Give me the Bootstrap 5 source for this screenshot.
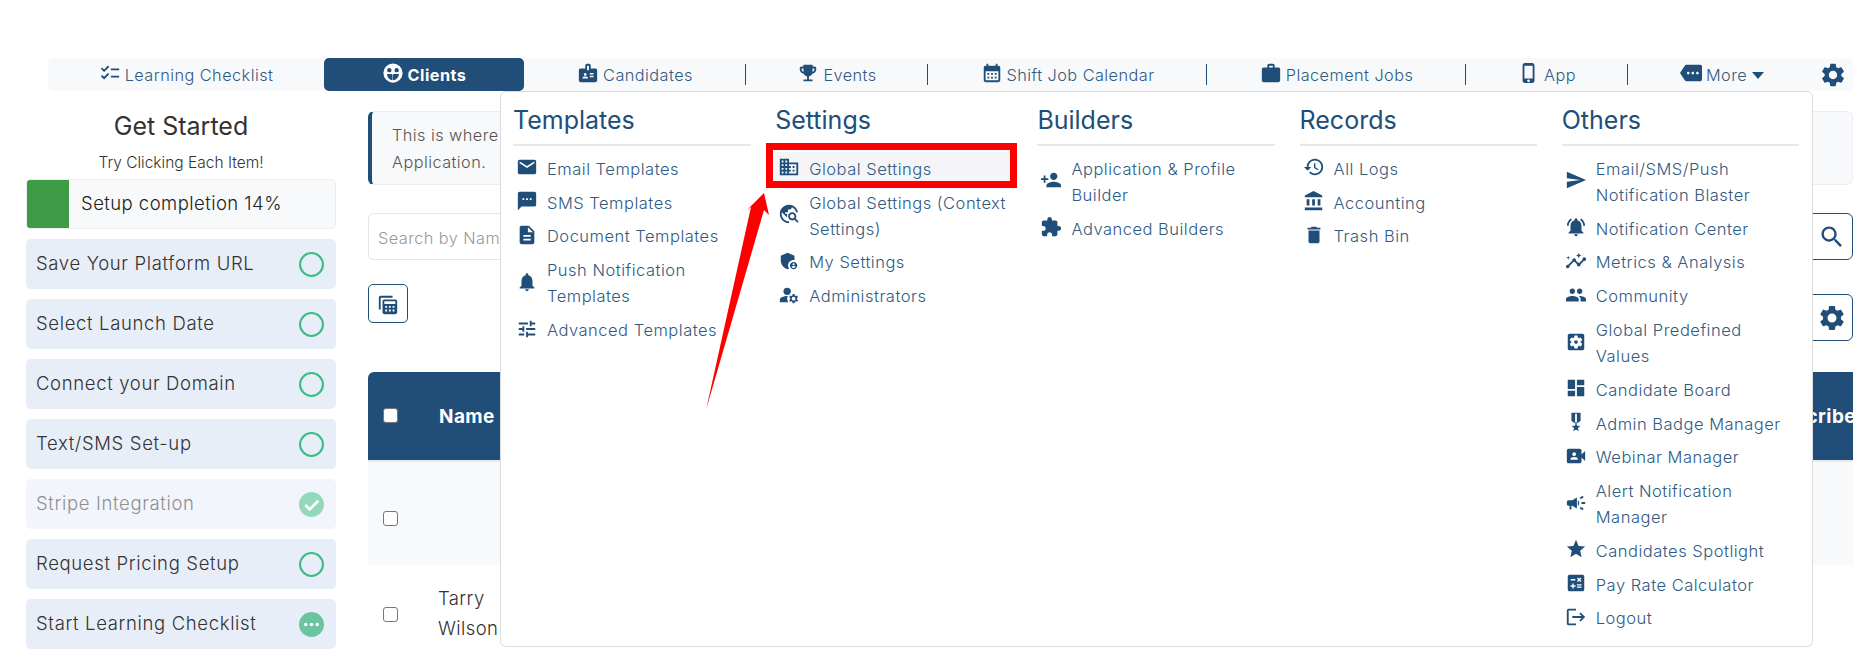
<!DOCTYPE html>
<html lang="en">
<head>
  <meta charset="UTF-8">
  <meta name="viewport" content="width=device-width, initial-scale=1.0">
  <title>Clients</title>
  <link href="https://cdn.jsdelivr.net/npm/bootstrap@5.3.0/dist/css/bootstrap.min.css" rel="stylesheet">
  <style>
    body {
      font-family: "Inter", "Lato", sans-serif;
      font-weight: 300;
      font-size: 16.3px;
      letter-spacing: .45px;
      color: #333;
      background: #fff;
      height: 655px;
      overflow: hidden;
      position: relative;
    }
    .ico {
      fill: #204e78;
      flex-shrink: 0;
    }
    .page-wrap {
      padding: 58px 16px 0 26px;
    }
    .top-bar {
      margin-left: 22px;
      height: 33px;
      background: #f8f9fa;
      border-radius: 5px;
    }
    .top-tab {
      height: 33px;
      display: flex;
      align-items: center;
      justify-content: center;
      gap: 4px;
      padding-top: 2px;
      position: relative;
      white-space: nowrap;
      color: #2f5a82;
      text-decoration: none;
    }
    .top-tab .ico {
      margin-top: -6px;
    }
    .top-tab.sep::after {
      content: "";
      position: absolute;
      right: 0;
      top: 6px;
      height: 21px;
      border-right: 1.5px solid #204e78;
    }
    .tab-active {
      background: #204e78;
      color: #fff;
      font-weight: 700;
      border-radius: 5px;
    }
    .tab-active .ico {
      fill: #fff;
    }
    .gear-tab {
      justify-content: flex-end;
      padding: 0 6px 0 0;
    }
    .gear-tab .ico {
      margin-top: 0;
    }
    .caret-down {
      width: 0;
      height: 0;
      border-left: 6.5px solid transparent;
      border-right: 6.5px solid transparent;
      border-top: 7px solid #204e78;
      margin-left: 1px;
    }
    .content-row {
      margin-top: 20px;
      gap: 32px;
    }
    .side-col {
      width: 310px;
      flex-shrink: 0;
    }
    .side-title {
      font-size: 25px;
      line-height: 30px;
      color: #333;
      text-align: center;
      margin: 0 0 10px;
      font-weight: 400;
      letter-spacing: 0;
    }
    .side-note {
      font-size: 15.5px;
      line-height: 24px;
      text-align: center;
      margin-bottom: 4px;
      letter-spacing: 0;
    }
    .setup-box {
      height: 50px;
      background: #f8f9fa;
      border: 1px solid #eceef1;
      border-radius: 4px;
      font-size: 18.5px;
      color: #222;
      overflow: hidden;
    }
    .setup-fill {
      width: 42px;
      background: #3f9c46;
      align-self: stretch;
      margin-right: 12px;
    }
    .step-row {
      height: 50px;
      margin-top: 10px;
      padding: 0 12px 0 10px;
      background: #e8eef8;
      border-radius: 5px;
      font-size: 18.5px;
      letter-spacing: .65px;
      color: #333;
    }
    .step-off {
      opacity: .55;
    }
    .main-col {
      flex: 1;
      min-width: 0;
    }
    .info-box {
      height: 74px;
      background: #f8f9fa;
      border: 1px solid #eceef1;
      border-left: 4px solid #204e78;
      border-radius: 6px;
      padding: 10px 20px;
      line-height: 27px;
      color: #555;
    }
    .search-row {
      margin-top: 28px;
      height: 47px;
    }
    .search-input {
      flex: 1;
      border: 1px solid #e3e5e8;
      border-right: 0;
      border-radius: 6px 0 0 6px;
      padding: 3px 9px 0;
      color: #999;
      display: flex;
      align-items: center;
    }
    .square-btn {
      width: 42px;
      border: 1px solid #204e78;
      border-radius: 0 6px 6px 0;
      background: #fff;
    }
    .tools-row {
      height: 47px;
      margin-top: 24px;
    }
    .calc-btn {
      width: 40px;
      height: 39px;
      border: 1px solid #204e78;
      border-radius: 5px;
      background: #fff;
      padding: 0;
    }
    .gear-btn {
      width: 60px;
      height: 47px;
      border: 1px solid #204e78;
      border-radius: 6px;
      background: #fff;
      margin-top: 10px;
      padding: 0 0 0 18px;
    }
    .data-grid {
      margin-top: 41px;
      width: 100%;
      table-layout: fixed;
      border-collapse: separate;
      border-spacing: 0;
    }
    .data-grid th {
      height: 90px;
      padding-top: 4px;
      background: #204e78;
      color: #fff;
      font-size: 19px;
      letter-spacing: .4px;
      font-weight: 700;
      border-bottom: 2px solid #e6e9ee;
      white-space: nowrap;
      overflow: hidden;
    }
    .data-grid th.tick-col {
      padding-top: 0;
    }
    .data-grid td {
      padding: 0;
    }
    .data-grid th:first-child {
      border-top-left-radius: 6px;
    }
    .row-shade td {
      height: 103px;
      background: #f8f9fa;
    }
    .row-plain td {
      height: 90px;
      font-size: 18.5px;
      letter-spacing: .4px;
      line-height: 30px;
      padding-top: 5px;
      color: #333;
    }
    .data-grid td.tick-col {
      width: 70px;
      padding-left: 15px;
      padding-top: 9px;
    }
    .data-grid th.tick-col {
      width: 70px;
      padding-left: 15px;
    }
    .tick {
      display: block;
      width: 15px;
      height: 15px;
      border: 1.5px solid #777;
      border-radius: 3px;
      background: #fff;
    }
    .menu-panel {
      position: absolute;
      left: 500px;
      top: 91px;
      width: 1313px;
      height: 556px;
      background: #fff;
      border: 1px solid #d9dbde;
      border-radius: 6px;
      padding: 11px 12px 0;
      gap: 24.6px;
      z-index: 5;
    }
    .menu-col {
      width: 237.6px;
      flex-shrink: 0;
    }
    .menu-head {
      font-size: 25px;
      line-height: 35px;
      color: #204e78;
      font-weight: 400;
      letter-spacing: 0;
      margin: 0;
      padding-bottom: 6px;
      border-bottom: 2px solid #e6e8eb;
    }
    .menu-link {
      display: flex;
      align-items: center;
      gap: 9px;
      padding: 3.9px 4px 3.9px 3px;
      line-height: 26px;
      color: #2f5a82;
      text-decoration: none;
      font-size: 16.5px;
      letter-spacing: .5px;
      white-space: nowrap;
    }
    .menu-link .ico {
      margin-top: -3px;
    }
    .menu-list {
      padding-top: 6px;
    }
    .menu-on {
      background: #f5f5f7;
    }
    .red-mark {
      position: absolute;
      left: 766px;
      top: 143px;
      width: 251px;
      height: 45px;
      border: 7px solid #f00;
      z-index: 6;
    }
    .red-arrow {
      position: absolute;
      left: 690px;
      top: 186px;
      z-index: 7;
    }
  </style>
</head>
<body>
  <svg width="0" height="0" class="position-absolute">
    <defs>
      <symbol id="i-checklist" viewBox="0 0 24 24"><path d="M22 7h-9v2h9V7zm0 8h-9v2h9v-2zM5.54 11L2 7.46l1.41-1.41 2.12 2.12 4.24-4.24 1.41 1.41L5.54 11zm0 8L2 15.46l1.41-1.41 2.12 2.12 4.24-4.24 1.41 1.41L5.54 19z"/></symbol>
      <symbol id="i-face" viewBox="0 0 24 24"><path fill-rule="evenodd" d="M12 1.5a10.5 10.5 0 1 0 0 21 10.5 10.5 0 0 0 0-21zM8 6.5a2.4 2.4 0 1 1 0 4.8 2.4 2.4 0 0 1 0-4.8zm8 0a2.4 2.4 0 1 1 0 4.8 2.4 2.4 0 0 1 0-4.8zM5.5 13.2h4.6c.8 0 1.4.6 1.4 1.4v5.4c-3.2-.3-5.8-3-6-6.800zm7.500 0h5.500c-.3 3.900-3 6.500-6.500 6.800v-5.800c0-.5.400-1 1-1z"/></symbol>
      <symbol id="i-badge" viewBox="0 0 24 24"><path d="M20 7h-5V4c0-1.100-.9-2-2-2h-2c-1.100 0-2 .9-2 2v3H4c-1.100 0-2 .9-2 2v11c0 1.100.9 2 2 2h16c1.100 0 2-.9 2-2V9c0-1.100-.9-2-2-2zM9 12c.83 0 1.500.67 1.500 1.500S9.830 15 9 15s-1.500-.67-1.500-1.500S8.170 12 9 12zm3 6H6v-.43c0-.6.36-1.150.92-1.390.64-.28 1.340-.43 2.080-.43s1.440.15 2.080.43c.55.24.92.78.92 1.390V18zm1-9h-2V4h2v5zm5 7.500h-4V15h4v1.500zm0-3h-4V12h4v1.500z"/></symbol>
      <symbol id="i-trophy" viewBox="0 0 24 24"><path d="M19 5h-2V3H7v2H5c-1.1 0-2 .9-2 2v1c0 2.55 1.92 4.63 4.39 4.94.63 1.5 1.98 2.63 3.61 2.96V19H7v2h10v-2h-4v-3.1c1.63-.33 2.98-1.46 3.61-2.96C19.08 12.63 21 10.55 21 8V7c0-1.1-.9-2-2-2zM5 8V7h2v3.82C5.84 10.4 5 9.3 5 8zm14 0c0 1.3-.84 2.4-2 2.82V7h2v1z"/></symbol>
      <symbol id="i-calendar" viewBox="0 0 24 24"><path d="M19 4h-1V2h-2v2H8V2H6v2H5c-1.11 0-1.99.9-1.99 2L3 20c0 1.1.89 2 2 2h14c1.1 0 2-.9 2-2V6c0-1.1-.9-2-2-2zm0 16H5V10h14v10zM9 14H7v-2h2v2zm4 0h-2v-2h2v2zm4 0h-2v-2h2v2zm-8 4H7v-2h2v2zm4 0h-2v-2h2v2zm4 0h-2v-2h2v2z"/></symbol>
      <symbol id="i-bag" viewBox="0 0 24 24"><path d="M20 6h-4V4c0-1.11-.89-2-2-2h-4c-1.11 0-2 .89-2 2v2H4c-1.11 0-2 .89-2 2v12c0 1.110.89 2 2 2h16c1.110 0 2-.89 2-2V8c0-1.11-.89-2-2-2zm-6 0h-4V4h4v2z"/></symbol>
      <symbol id="i-phone" viewBox="0 0 24 24"><path d="M15.5 1h-8C6.12 1 5 2.12 5 3.5v17C5 21.88 6.12 23 7.5 23h8c1.38 0 2.5-1.12 2.5-2.5v-17C18 2.12 16.88 1 15.5 1zm-4 21c-.83 0-1.5-.67-1.5-1.5s.67-1.5 1.5-1.5 1.5.67 1.5 1.5-.67 1.5-1.5 1.5zm4.5-4H7V4h9v14z"/></symbol>
      <symbol id="i-more" viewBox="0 0 24 24"><path d="M22 3H7c-.69 0-1.23.35-1.59.88L0 12l5.41 8.11c.36.53.9.89 1.59.89h15c1.1 0 2-.9 2-2V5c0-1.1-.9-2-2-2zM9 13.5c-.83 0-1.5-.67-1.5-1.5s.67-1.5 1.5-1.5 1.5.67 1.5 1.5-.67 1.5-1.5 1.5zm5 0c-.83 0-1.5-.67-1.5-1.5s.67-1.5 1.5-1.5 1.5.67 1.5 1.5-.67 1.5-1.5 1.5zm5 0c-.83 0-1.5-.67-1.5-1.5s.67-1.5 1.5-1.5 1.5.67 1.5 1.5-.67 1.5-1.5 1.5z"/></symbol>
      <symbol id="i-gear" viewBox="0 0 24 24"><path d="M19.14 12.94c.04-.3.06-.61.06-.94 0-.32-.02-.64-.07-.94l2.03-1.58c.18-.14.23-.41.12-.61l-1.92-3.32c-.12-.22-.37-.29-.59-.22l-2.39.96c-.5-.38-1.03-.7-1.62-.94l-.36-2.54c-.04-.24-.24-.41-.48-.41h-3.84c-.24 0-.43.17-.47.41l-.36 2.54c-.59.24-1.13.57-1.62.94l-2.39-.96c-.22-.08-.47 0-.59.22L2.74 8.87c-.12.21-.08.47.12.61l2.03 1.58c-.05.3-.09.63-.09.94s.02.64.07.94l-2.03 1.58c-.18.14-.23.41-.12.61l1.92 3.32c.12.22.37.29.59.22l2.39-.96c.5.38 1.03.7 1.62.94l.36 2.54c.05.24.24.41.48.41h3.84c.24 0 .44-.17.47-.41l.36-2.54c.59-.24 1.13-.56 1.62-.94l2.39.96c.22.08.47 0 .59-.22l1.92-3.32c.12-.22.07-.47-.12-.61l-2.01-1.58zM12 15.6c-1.98 0-3.6-1.62-3.6-3.6s1.62-3.6 3.6-3.6 3.6 1.62 3.6 3.6-1.62 3.6-3.6 3.6z"/></symbol>
      <symbol id="i-search" viewBox="0 0 24 24"><path d="M15.5 14h-.79l-.28-.27C15.41 12.59 16 11.11 16 9.5 16 5.91 13.09 3 9.5 3S3 5.91 3 9.5 5.91 16 9.5 16c1.61 0 3.09-.59 4.23-1.57l.27.28v.79l5 4.99L20.49 19l-4.99-5zm-6 0C7.01 14 5 11.99 5 9.5S7.01 5 9.5 5 14 7.01 14 9.5 11.99 14 9.5 14z"/></symbol>
      <symbol id="i-calc-copy" viewBox="0 0 24 24"><path d="M4 2h13v2H4v13H2V4c0-1.1.9-2 2-2z"/><path fill-rule="evenodd" d="M8 6h12c1.1 0 2 .9 2 2v12c0 1.1-.9 2-2 2H8c-1.1 0-2-.9-2-2V8c0-1.1.9-2 2-2zm0 2v3h12V8H8zm1 5v2h2v-2H9zm4 0v2h2v-2h-2zm4 0v2h2v-2h-2zm-8 4v2h2v-2H9zm4 0v2h2v-2h-2zm4 0v2h2v-2h-2z"/></symbol>
      <symbol id="i-email" viewBox="0 0 24 24"><path d="M20 4H4c-1.1 0-1.99.9-1.99 2L2 18c0 1.1.9 2 2 2h16c1.1 0 2-.9 2-2V6c0-1.1-.9-2-2-2zm0 4l-8 5-8-5V6l8 5 8-5v2z"/></symbol>
      <symbol id="i-sms" viewBox="0 0 24 24"><path d="M20 2H4c-1.1 0-1.99.9-1.99 2L2 22l4-4h14c1.1 0 2-.9 2-2V4c0-1.1-.9-2-2-2zM9 11H7V9h2v2zm4 0h-2V9h2v2zm4 0h-2V9h2v2z"/></symbol>
      <symbol id="i-doc" viewBox="0 0 24 24"><path d="M14 2H6c-1.1 0-1.99.9-1.99 2L4 20c0 1.1.89 2 1.99 2H18c1.1 0 2-.9 2-2V8l-6-6zm2 16H8v-2h8v2zm0-4H8v-2h8v2zm-3-5V3.5L18.5 9H13z"/></symbol>
      <symbol id="i-bell" viewBox="0 0 24 24"><path d="M12 22c1.1 0 2-.9 2-2h-4c0 1.1.89 2 2 2zm6-6v-5c0-3.07-1.64-5.64-4.5-6.32V4c0-.83-.67-1.5-1.5-1.5s-1.5.67-1.5 1.5v.68C7.63 5.36 6 7.92 6 11v5l-2 2v1h16v-1l-2-2z"/></symbol>
      <symbol id="i-tune" viewBox="0 0 24 24"><path d="M3 17v2h6v-2H3zM3 5v2h10V5H3zm10 16v-2h8v-2h-8v-2h-2v6h2zM7 9v2H3v2h4v2h2V9H7zm14 4v-2H11v2h10zm-6-4h2V7h4V5h-4V3h-2v6z"/></symbol>
      <symbol id="i-domain" viewBox="0 0 24 24"><path d="M12 7V3H2v18h20V7H12zM6 19H4v-2h2v2zm0-4H4v-2h2v2zm0-4H4V9h2v2zm0-4H4V5h2v2zm4 12H8v-2h2v2zm0-4H8v-2h2v2zm0-4H8V9h2v2zm0-4H8V5h2v2zm10 12h-8v-2h2v-2h-2v-2h2v-2h-2V9h8v10zm-2-8h-2v2h2v-2zm0 4h-2v2h2v-2z"/></symbol>
      <symbol id="i-travel" viewBox="0 0 24 24"><path d="M19.3 16.9c.4-.7.7-1.5.7-2.4 0-2.5-2-4.5-4.5-4.5S11 12 11 14.5s2 4.5 4.5 4.5c.9 0 1.7-.3 2.4-.7l3.2 3.2 1.4-1.4-3.2-3.2zm-3.8.1c-1.4 0-2.5-1.1-2.5-2.5s1.1-2.5 2.5-2.5 2.5 1.1 2.5 2.5-1.1 2.5-2.5 2.5zM12 20v2C6.48 22 2 17.52 2 12S6.48 2 12 2c4.84 0 8.87 3.44 9.8 8h-2.07c-.64-2.46-2.4-4.47-4.73-5.41V5c0 1.1-.9 2-2 2h-2v2c0 .55-.45 1-1 1H8v2h2v3H9l-4.79-4.79C4.08 10.79 4 11.38 4 12c0 4.41 3.59 8 8 8z"/></symbol>
      <symbol id="i-shield" viewBox="0 0 24 24"><path d="M17 11c.34 0 .67.04 1 .09V6.27L10.5 3 3 6.27v4.91c0 4.54 3.2 8.79 7.5 9.82.55-.13 1.08-.32 1.6-.55-.69-.98-1.1-2.17-1.1-3.45 0-3.31 2.69-6 6-6z"/><path d="M17 13c-2.21 0-4 1.79-4 4s1.79 4 4 4 4-1.79 4-4-1.79-4-4-4zm0 1.38c.62 0 1.12.51 1.12 1.12s-.51 1.12-1.12 1.12-1.12-.51-1.12-1.12.5-1.12 1.12-1.12zm0 5.37c-.93 0-1.74-.46-2.24-1.17.05-.72 1.51-1.08 2.24-1.08s2.19.36 2.24 1.08c-.5.71-1.31 1.17-2.24 1.17z"/></symbol>
      <symbol id="i-admins" viewBox="0 0 24 24"><circle cx="10" cy="8" r="4"/><path d="M10.67 13.02c-.22-.01-.44-.02-.67-.02-2.42 0-4.68.67-6.61 1.82-.88.52-1.39 1.5-1.39 2.53V20h9.26c-.79-1.13-1.26-2.51-1.26-4 0-1.07.25-2.07.67-2.98z"/><path d="M20.75 16c0-.22-.03-.42-.06-.63l1.14-1.01-1-1.73-1.45.49c-.32-.27-.68-.48-1.08-.63L18 11h-2l-.3 1.49c-.4.15-.76.36-1.08.63l-1.45-.49-1 1.73 1.14 1.01c-.03.21-.06.41-.06.63s.03.42.06.63l-1.14 1.01 1 1.73 1.45-.49c.32.27.68.48 1.08.63L16 21h2l.3-1.49c.4-.15.76-.36 1.08-.63l1.45.49 1-1.73-1.14-1.01c.03-.21.06-.41.06-.63zM17 18c-1.1 0-2-.9-2-2s.9-2 2-2 2 .9 2 2-.9 2-2 2z"/></symbol>
      <symbol id="i-personadd" viewBox="0 0 24 24"><path d="M15 12c2.21 0 4-1.79 4-4s-1.79-4-4-4-4 1.79-4 4 1.79 4 4 4zm-9-2V7H4v3H1v2h3v3h2v-3h3v-2H6zm9 4c-2.67 0-8 1.34-8 4v2h16v-2c0-2.66-5.33-4-8-4z"/></symbol>
      <symbol id="i-puzzle" viewBox="0 0 24 24"><path d="M20.5 11H19V7c0-1.1-.9-2-2-2h-4V3.5C13 2.12 11.88 1 10.5 1S8 2.12 8 3.5V5H4c-1.1 0-1.99.9-1.99 2v3.8H3.5c1.49 0 2.7 1.21 2.7 2.7s-1.21 2.7-2.7 2.7H2V20c0 1.1.9 2 2 2h3.8v-1.5c0-1.49 1.21-2.7 2.7-2.7 1.49 0 2.7 1.21 2.7 2.7V22H17c1.1 0 2-.9 2-2v-4h1.5c1.38 0 2.5-1.12 2.5-2.5S21.88 11 20.5 11z"/></symbol>
      <symbol id="i-history" viewBox="0 0 24 24"><path d="M13 3c-4.97 0-9 4.03-9 9H1l3.89 3.89.07.14L9 12H6c0-3.87 3.13-7 7-7s7 3.13 7 7-3.13 7-7 7c-1.93 0-3.68-.79-4.94-2.06l-1.42 1.42C8.27 19.99 10.51 21 13 21c4.97 0 9-4.03 9-9s-4.03-9-9-9zm-1 5v5l4.28 2.54.72-1.21-3.5-2.08V8H12z"/></symbol>
      <symbol id="i-bank" viewBox="0 0 24 24"><path d="M4 10v7h3v-7H4zm6 0v7h3v-7h-3zM2 22h19v-3H2v3zm14-12v7h3v-7h-3zm-4.5-9L2 6v2h19V6l-9.5-5z"/></symbol>
      <symbol id="i-trash" viewBox="0 0 24 24"><path d="M6 19c0 1.1.9 2 2 2h8c1.1 0 2-.9 2-2V7H6v12zM19 4h-3.5l-1-1h-5l-1 1H5v2h14V4z"/></symbol>
      <symbol id="i-send" viewBox="0 0 24 24"><path d="M2.01 21L23 12 2.01 3 2 10l15 2-15 2z"/></symbol>
      <symbol id="i-bellactive" viewBox="0 0 24 24"><path d="M7.58 4.08L6.15 2.65C3.75 4.48 2.17 7.3 2.03 10.5h2c.15-2.65 1.51-4.97 3.55-6.42zm12.39 6.42h2c-.15-3.2-1.73-6.02-4.12-7.85l-1.42 1.43c2.02 1.45 3.39 3.77 3.54 6.42zM18 11c0-3.07-1.64-5.64-4.5-6.32V4c0-.83-.67-1.5-1.5-1.5s-1.5.67-1.5 1.5v.68C7.63 5.36 6 7.92 6 11v5l-2 2v1h16v-1l-2-2v-5zm-6 11c.14 0 .27-.01.4-.04.65-.14 1.18-.58 1.44-1.18.1-.24.15-.5.15-.78h-4c.01 1.1.9 2 2.01 2z"/></symbol>
      <symbol id="i-insights" viewBox="0 0 24 24"><path d="M21 8c-1.45 0-2.26 1.44-1.93 2.51l-3.55 3.56c-.3-.09-.74-.09-1.04 0l-2.55-2.55C12.27 10.45 11.46 9 10 9c-1.45 0-2.27 1.44-1.93 2.52l-4.56 4.55C2.44 15.74 1 16.55 1 18c0 1.1.9 2 2 2 1.45 0 2.26-1.44 1.93-2.51l4.55-4.56c.3.09.74.09 1.04 0l2.55 2.55C12.73 16.55 13.54 18 15 18c1.45 0 2.27-1.44 1.93-2.52l3.56-3.55c1.07.33 2.51-.48 2.51-1.93 0-1.1-.9-2-2-2z"/><path d="M15 9l.94-2.07L18 6l-2.06-.93L15 3l-.92 2.07L12 6l2.08.93zM3.5 11L4 9l2-.5L4 8l-.5-2L3 8l-2 .5L3 9z"/></symbol>
      <symbol id="i-people" viewBox="0 0 24 24"><path d="M16 11c1.66 0 2.99-1.34 2.99-3S17.66 5 16 5c-1.66 0-3 1.34-3 3s1.34 3 3 3zm-8 0c1.66 0 2.99-1.34 2.99-3S9.66 5 8 5C6.34 5 5 6.34 5 8s1.34 3 3 3zm0 2c-2.33 0-7 1.17-7 3.5V19h14v-2.5c0-2.33-4.67-3.5-7-3.5zm8 0c-.29 0-.62.02-.97.05 1.16.84 1.97 1.97 1.97 3.45V19h6v-2.5c0-2.33-4.67-3.5-7-3.5z"/></symbol>
      <symbol id="i-setbox" viewBox="0 0 24 24"><path d="M12 10c-1.1 0-2 .9-2 2s.9 2 2 2 2-.9 2-2-.9-2-2-2zm7-7H5c-1.11 0-2 .9-2 2v14c0 1.1.89 2 2 2h14c1.11 0 2-.9 2-2V5c0-1.1-.89-2-2-2zm-1.75 9c0 .23-.02.46-.05.68l1.48 1.16c.13.11.17.3.08.45l-1.4 2.42c-.09.15-.27.21-.43.15l-1.74-.7c-.36.28-.76.51-1.18.69l-.26 1.85c-.03.17-.18.3-.35.3h-2.8c-.17 0-.32-.13-.35-.29l-.26-1.85c-.43-.18-.82-.41-1.18-.69l-1.74.7c-.16.06-.34 0-.43-.15l-1.4-2.42c-.09-.15-.05-.34.08-.45l1.48-1.16c-.03-.23-.05-.46-.05-.69 0-.23.02-.46.05-.68l-1.48-1.16c-.13-.11-.17-.3-.08-.45l1.4-2.42c.09-.15.27-.21.43-.15l1.74.7c.36-.28.76-.51 1.18-.69l.26-1.85c.03-.17.18-.3.35-.3h2.8c.17 0 .32.13.35.29l.26 1.85c.43.18.82.41 1.18.69l1.74-.7c.16-.06.34 0 .43.15l1.4 2.42c.09.15.05.34-.08.45l-1.48 1.16c.03.23.05.46.05.69z"/></symbol>
      <symbol id="i-board" viewBox="0 0 24 24"><path d="M3 13h8V3H3v10zm0 8h8v-6H3v6zm10 0h8V11h-8v10zm0-18v6h8V3h-8z"/></symbol>
      <symbol id="i-medal" viewBox="0 0 24 24"><path d="M17 10.43V2H7v8.43c0 .35.18.68.49.86l4.18 2.51-.99 2.34-3.41.29 2.59 2.24L9.07 22 12 20.23 14.93 22l-.78-3.33 2.59-2.24-3.41-.29-.99-2.34 4.18-2.51c.3-.18.48-.5.48-.86zm-4 1.8l-1 .6-1-.6V3h2v9.23z"/></symbol>
      <symbol id="i-video" viewBox="0 0 24 24"><path d="M18 10.48V6c0-1.1-.9-2-2-2H4c-1.1 0-2 .9-2 2v12c0 1.1.9 2 2 2h12c1.1 0 2-.9 2-2v-4.48l4 3.98v-11l-4 3.98zM10 8c1.1 0 2 .9 2 2s-.9 2-2 2-2-.9-2-2 .9-2 2-2zm4 8H6v-.57c0-.81.48-1.53 1.22-1.85.85-.37 1.79-.58 2.78-.58.99 0 1.93.21 2.78.58.74.32 1.22 1.04 1.22 1.85V16z"/></symbol>
      <symbol id="i-horn" viewBox="0 0 24 24"><path d="M18 11v2h4v-2h-4zm-2 6.61c.96.71 2.21 1.65 3.2 2.39.4-.53.8-1.07 1.2-1.6-.99-.74-2.24-1.68-3.2-2.4-.4.54-.8 1.08-1.2 1.61zM20.4 5.6c-.4-.53-.8-1.07-1.2-1.6-.99.74-2.24 1.68-3.2 2.4.4.53.8 1.07 1.2 1.6.96-.72 2.21-1.65 3.2-2.4zM4 9c-1.1 0-2 .9-2 2v2c0 1.1.9 2 2 2h1v4h2v-4h1l5 3V6L8 9H4zm11.5 3c0-1.33-.58-2.53-1.5-3.35v6.69c.92-.81 1.5-2.01 1.5-3.34z"/></symbol>
      <symbol id="i-star" viewBox="0 0 24 24"><path d="M12 17.27L18.18 21l-1.64-7.03L22 9.24l-7.19-.61L12 2 9.19 8.63 2 9.24l5.46 4.73L5.82 21z"/></symbol>
      <symbol id="i-calc" viewBox="0 0 24 24"><path d="M19 3H5c-1.1 0-2 .9-2 2v14c0 1.1.9 2 2 2h14c1.1 0 2-.9 2-2V5c0-1.1-.9-2-2-2zm-5.97 4.06L14.09 6l1.41 1.41L16.91 6l1.06 1.06-1.41 1.41 1.41 1.41-1.06 1.06-1.41-1.4-1.41 1.41-1.06-1.06 1.41-1.41-1.41-1.42zm-6.78.66h5v1.5h-5v-1.5zM11.5 16h-2v2H8v-2H6v-1.5h2v-2h1.5v2h2V16zm6.5 1.25h-5v-1.5h5v1.5zm0-2.5h-5v-1.5h5v1.5z"/></symbol>
      <symbol id="i-logout" viewBox="0 0 24 24"><path d="M17 7l-1.41 1.41L18.17 11H8v2h10.17l-2.58 2.58L17 17l5-5zM4 5h8V3H4c-1.1 0-2 .9-2 2v14c0 1.1.9 2 2 2h8v-2H4V5z"/></symbol>
      <symbol id="i-open" viewBox="0 0 24 24"><circle cx="12" cy="12" r="11" fill="none" stroke="#3dba85" stroke-width="2"/></symbol>
      <symbol id="i-done" viewBox="0 0 24 24"><circle cx="12" cy="12" r="12" fill="#3dba85"/><path d="M6 12.5l4.2 4.2L18.5 8.4" fill="none" stroke="#fff" stroke-width="2.6"/></symbol>
      <symbol id="i-dots" viewBox="0 0 24 24"><circle cx="12" cy="12" r="12" fill="#6cc3a0"/><circle cx="6.5" cy="12" r="1.7" fill="#fff"/><circle cx="12" cy="12" r="1.7" fill="#fff"/><circle cx="17.5" cy="12" r="1.7" fill="#fff"/></symbol>
    </defs>
  </svg>

  <div class="page-wrap">
    <nav class="top-bar d-flex">
      <a class="top-tab" style="width:276px"><svg class="ico" width="22" height="22"><use href="#i-checklist"/></svg>Learning Checklist</a>
      <a class="top-tab tab-active" style="width:200px"><svg class="ico" width="22" height="22"><use href="#i-face"/></svg>Clients</a>
      <a class="top-tab sep" style="width:222px"><svg class="ico" width="22" height="22"><use href="#i-badge"/></svg>Candidates</a>
      <a class="top-tab sep" style="width:182px"><svg class="ico" width="22" height="22"><use href="#i-trophy"/></svg>Events</a>
      <a class="top-tab sep" style="width:279px"><svg class="ico" width="22" height="22"><use href="#i-calendar"/></svg>Shift Job Calendar</a>
      <a class="top-tab sep" style="width:259px"><svg class="ico" width="22" height="22"><use href="#i-bag"/></svg>Placement Jobs</a>
      <a class="top-tab sep" style="width:162px"><svg class="ico" width="22" height="22"><use href="#i-phone"/></svg>App</a>
      <a class="top-tab" style="width:188px"><svg class="ico" width="22" height="22"><use href="#i-more"/></svg>More<span class="caret-down"></span></a>
      <a class="top-tab gear-tab flex-grow-1"><svg class="ico" width="28" height="28"><use href="#i-gear"/></svg></a>
    </nav>

    <div class="content-row d-flex">
      <aside class="side-col">
        <h2 class="side-title">Get Started</h2>
        <div class="side-note">Try Clicking Each Item!</div>
        <div class="setup-box d-flex align-items-center"><span class="setup-fill"></span>Setup completion 14%</div>
        <div class="step-row d-flex align-items-center justify-content-between">Save Your Platform URL<svg width="25" height="25"><use href="#i-open"/></svg></div>
        <div class="step-row d-flex align-items-center justify-content-between">Select Launch Date<svg width="25" height="25"><use href="#i-open"/></svg></div>
        <div class="step-row d-flex align-items-center justify-content-between">Connect your Domain<svg width="25" height="25"><use href="#i-open"/></svg></div>
        <div class="step-row d-flex align-items-center justify-content-between">Text/SMS Set-up<svg width="25" height="25"><use href="#i-open"/></svg></div>
        <div class="step-row step-off d-flex align-items-center justify-content-between">Stripe Integration<svg width="25" height="25"><use href="#i-done"/></svg></div>
        <div class="step-row d-flex align-items-center justify-content-between">Request Pricing Setup<svg width="25" height="25"><use href="#i-open"/></svg></div>
        <div class="step-row d-flex align-items-center justify-content-between">Start Learning Checklist<svg width="25" height="25"><use href="#i-dots"/></svg></div>
      </aside>

      <main class="main-col">
        <div class="info-box">This is where<br>Application.</div>
        <div class="search-row d-flex">
          <div class="search-input">Search by Name</div>
          <button class="square-btn d-flex align-items-center justify-content-center p-0"><svg class="ico" width="28" height="28"><use href="#i-search"/></svg></button>
        </div>
        <div class="tools-row d-flex justify-content-between align-items-start">
          <button class="calc-btn"><svg class="ico" width="22" height="22"><use href="#i-calc-copy"/></svg></button>
          <button class="gear-btn"><svg class="ico" width="30" height="30"><use href="#i-gear"/></svg></button>
        </div>
        <table class="data-grid">
          <tr>
            <th class="tick-col"><span class="tick"></span></th>
            <th style="width:200px">Name</th>
            <th></th>
            <th style="width:96px">Subscribed</th>
          </tr>
          <tr class="row-shade">
            <td class="tick-col"><span class="tick"></span></td>
            <td></td><td></td><td></td>
          </tr>
          <tr class="row-plain">
            <td class="tick-col"><span class="tick"></span></td>
            <td>Tarry<br>Wilson</td><td></td><td></td>
          </tr>
        </table>
      </main>
    </div>
  </div>

  <div class="menu-panel d-flex">
    <section class="menu-col">
      <h3 class="menu-head">Templates</h3>
      <div class="menu-list">
        <a class="menu-link"><svg class="ico" width="22" height="22"><use href="#i-email"/></svg>Email Templates</a>
        <a class="menu-link"><svg class="ico" width="22" height="22"><use href="#i-sms"/></svg>SMS Templates</a>
        <a class="menu-link"><svg class="ico" width="22" height="22"><use href="#i-doc"/></svg>Document Templates</a>
        <a class="menu-link"><svg class="ico" width="22" height="22"><use href="#i-bell"/></svg><span>Push Notification<br>Templates</span></a>
        <a class="menu-link"><svg class="ico" width="22" height="22"><use href="#i-tune"/></svg>Advanced Templates</a>
      </div>
    </section>
    <section class="menu-col">
      <h3 class="menu-head">Settings</h3>
      <div class="menu-list">
        <a class="menu-link menu-on"><svg class="ico" width="22" height="22"><use href="#i-domain"/></svg>Global Settings</a>
        <a class="menu-link"><svg class="ico" width="22" height="22"><use href="#i-travel"/></svg><span>Global Settings (Context<br>Settings)</span></a>
        <a class="menu-link"><svg class="ico" width="22" height="22"><use href="#i-shield"/></svg>My Settings</a>
        <a class="menu-link"><svg class="ico" width="22" height="22"><use href="#i-admins"/></svg>Administrators</a>
      </div>
    </section>
    <section class="menu-col">
      <h3 class="menu-head">Builders</h3>
      <div class="menu-list">
        <a class="menu-link"><svg class="ico" width="22" height="22"><use href="#i-personadd"/></svg><span>Application &amp; Profile<br>Builder</span></a>
        <a class="menu-link"><svg class="ico" width="22" height="22"><use href="#i-puzzle"/></svg>Advanced Builders</a>
      </div>
    </section>
    <section class="menu-col">
      <h3 class="menu-head">Records</h3>
      <div class="menu-list">
        <a class="menu-link"><svg class="ico" width="22" height="22"><use href="#i-history"/></svg>All Logs</a>
        <a class="menu-link"><svg class="ico" width="22" height="22"><use href="#i-bank"/></svg>Accounting</a>
        <a class="menu-link"><svg class="ico" width="22" height="22"><use href="#i-trash"/></svg>Trash Bin</a>
      </div>
    </section>
    <section class="menu-col">
      <h3 class="menu-head">Others</h3>
      <div class="menu-list">
        <a class="menu-link"><svg class="ico" width="22" height="22"><use href="#i-send"/></svg><span>Email/SMS/Push<br>Notification Blaster</span></a>
        <a class="menu-link"><svg class="ico" width="22" height="22"><use href="#i-bellactive"/></svg>Notification Center</a>
        <a class="menu-link"><svg class="ico" width="22" height="22"><use href="#i-insights"/></svg>Metrics &amp; Analysis</a>
        <a class="menu-link"><svg class="ico" width="22" height="22"><use href="#i-people"/></svg>Community</a>
        <a class="menu-link"><svg class="ico" width="22" height="22"><use href="#i-setbox"/></svg><span>Global Predefined<br>Values</span></a>
        <a class="menu-link"><svg class="ico" width="22" height="22"><use href="#i-board"/></svg>Candidate Board</a>
        <a class="menu-link"><svg class="ico" width="22" height="22"><use href="#i-medal"/></svg>Admin Badge Manager</a>
        <a class="menu-link"><svg class="ico" width="22" height="22"><use href="#i-video"/></svg>Webinar Manager</a>
        <a class="menu-link"><svg class="ico" width="22" height="22"><use href="#i-horn"/></svg><span>Alert Notification<br>Manager</span></a>
        <a class="menu-link"><svg class="ico" width="22" height="22"><use href="#i-star"/></svg>Candidates Spotlight</a>
        <a class="menu-link"><svg class="ico" width="22" height="22"><use href="#i-calc"/></svg>Pay Rate Calculator</a>
        <a class="menu-link"><svg class="ico" width="22" height="22"><use href="#i-logout"/></svg>Logout</a>
      </div>
    </section>
  </div>

  <div class="red-mark"></div>
  <svg class="red-arrow" width="90" height="230" viewBox="0 0 90 230">
    <path d="M74 7L79 29L74 24L16 224L61 21L57 24z" fill="#f00"/>
  </svg>
</body>
</html>
